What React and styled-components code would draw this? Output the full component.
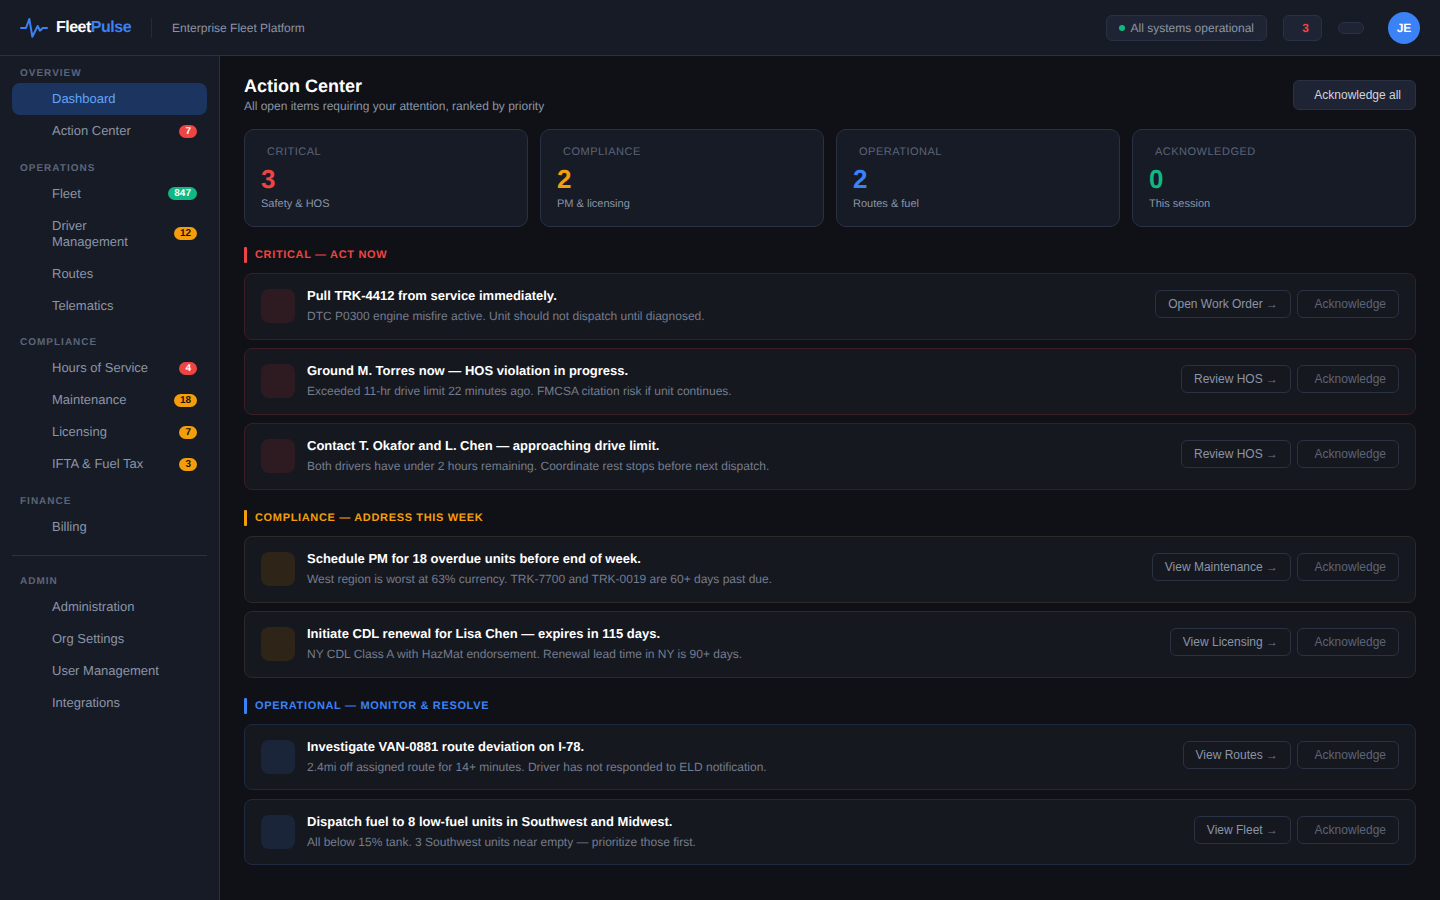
import React from "react";
import styled, { createGlobalStyle } from "styled-components";

const tones = {
  red: { main: "#ef4444", icon: "#2e1b21", border: "#3d1d24" },
  amber: { main: "#f59e0b", icon: "#2e2418", border: "#2a2a2a" },
  blue: { main: "#3b82f6", icon: "#1a2539", border: "#1e2a3e" },
  green: { main: "#10b981" },
};

const GlobalStyle = createGlobalStyle`
  * { box-sizing: border-box; }
  body {
    margin: 0;
    background: #0f1116;
    font-family: "Liberation Sans", Arial, sans-serif;
    text-rendering: geometricPrecision;
    overflow: hidden;
  }
`;

const Shell = styled.div`
  height: 900px;
  display: flex;
  flex-direction: column;
`;

const Header = styled.header`
  height: 56px;
  flex-shrink: 0;
  display: flex;
  align-items: center;
  padding: 0 20px;
  background: #171b26;
  border-bottom: 1px solid #2a3142;
`;

const Logo = styled.div`
  display: flex;
  align-items: center;
  gap: 8px;
  font-size: 16px;
  font-weight: 700;
  letter-spacing: -0.5px;
  color: #fff;
  span { color: #3b82f6; }
`;

const Divider = styled.div`
  width: 1px;
  height: 20px;
  background: #252b3a;
  margin: 0 20px;
`;

const Tagline = styled.div`
  font-size: 12px;
  color: #8b95a7;
`;

const HeaderRight = styled.div`
  margin-left: auto;
  display: flex;
  align-items: center;
`;

const StatusPill = styled.div`
  height: 26px;
  display: flex;
  align-items: center;
  gap: 6px;
  padding: 0 12px;
  font-size: 12px;
  color: #8b95a7;
  background: #1e2433;
  border: 1px solid #2a3142;
  border-radius: 6px;
  margin-right: 16px;
`;

const Dot = styled.span`
  width: 6px;
  height: 6px;
  border-radius: 50%;
  background: #10b981;
`;

const AlertPill = styled.div`
  width: 39px;
  height: 26px;
  display: flex;
  align-items: center;
  justify-content: flex-end;
  padding-right: 12px;
  font-size: 12px;
  font-weight: 700;
  color: #ef4444;
  background: #1e2433;
  border: 1px solid #2a3142;
  border-radius: 6px;
  margin-right: 16px;
`;

const EmptyPill = styled.div`
  width: 26px;
  height: 12px;
  background: #1e2433;
  border: 1px solid #2a3142;
  border-radius: 6px;
  margin-right: 24px;
`;

const Avatar = styled.div`
  width: 32px;
  height: 32px;
  border-radius: 50%;
  background: #3b82f6;
  color: #fff;
  font-size: 12px;
  font-weight: 700;
  display: flex;
  align-items: center;
  justify-content: center;
`;

const Body = styled.div`
  flex: 1;
  display: flex;
  min-height: 0;
`;

const Sidebar = styled.nav`
  width: 220px;
  flex-shrink: 0;
  padding: 11.4px 12px 0;
  background: #171b26;
  border-right: 1px solid #2a3142;
`;

const NavSection = styled.div`
  margin-bottom: ${(p) => (p.$ruled ? "11.9px" : "15.2px")};
`;

const NavLabel = styled.div`
  font-size: 10px;
  line-height: 11px;
  font-weight: 700;
  letter-spacing: 1px;
  color: #5c6579;
  padding: 1px 8px 0;
  margin-bottom: 4px;
`;

const NavItem = styled.div`
  display: flex;
  align-items: center;
  justify-content: space-between;
  gap: 10px;
  padding: 8px 10px 8px 40px;
  margin-bottom: 0.4px;
  font-size: 13px;
  line-height: 15.6px;
  color: ${(p) => (p.$active ? "#60a5fa" : "#8b95a7")};
  background: ${(p) => (p.$active ? "#1c3560" : "transparent")};
  border-radius: 8px;
`;

const Badge = styled.span`
  flex-shrink: 0;
  font-size: 10px;
  line-height: 13px;
  font-weight: 700;
  padding: 0 6px;
  border-radius: 7px;
  color: ${(p) => (p.$tone === "amber" ? "#1a1200" : "#fff")};
  background: ${(p) => tones[p.$tone].main};
`;

const NavRule = styled.div`
  height: 1px;
  background: #2a3142;
  margin-bottom: 19.5px;
`;

const Main = styled.main`
  flex: 1;
  min-width: 0;
  padding: 20px 24px;
`;

const TitleRow = styled.div`
  display: flex;
  align-items: flex-start;
  justify-content: space-between;
  margin-bottom: 15.5px;
`;

const Title = styled.h1`
  margin: 0;
  font-size: 18px;
  line-height: 21px;
  font-weight: 700;
  color: #fff;
`;

const Subtitle = styled.p`
  margin: 1.5px 0 0;
  font-size: 12px;
  line-height: 15px;
  color: #8b95a7;
`;

const AckAll = styled.button`
  width: 123px;
  height: 30px;
  margin-top: 4px;
  padding: 0 14px 0 0;
  text-align: right;
  font: inherit;
  font-size: 12px;
  color: #d1d5db;
  background: #1e2433;
  border: 1px solid #2a3142;
  border-radius: 6px;
`;

const StatGrid = styled.div`
  display: grid;
  grid-template-columns: repeat(4, 1fr);
  gap: 12px;
  margin-bottom: 20px;
`;

const StatCard = styled.div`
  height: 98px;
  padding: 16px;
  background: #171b26;
  border: 1px solid #2a3142;
  border-radius: 10px;
`;

const StatLabel = styled.div`
  font-size: 11px;
  line-height: 13px;
  letter-spacing: 0.5px;
  color: #5c6579;
  padding-left: 6px;
  margin-bottom: 5px;
`;

const StatValue = styled.div`
  font-size: 26px;
  line-height: 30px;
  font-weight: 700;
  color: ${(p) => tones[p.$tone].main};
  margin-bottom: 3px;
`;

const StatSub = styled.div`
  font-size: 11px;
  line-height: 14px;
  color: #8b95a7;
`;

const Section = styled.section`
  margin-bottom: 20.15px;
`;

const SectionHead = styled.div`
  display: flex;
  align-items: center;
  gap: 8px;
  height: 16px;
  margin-bottom: 10.45px;
  font-size: 11px;
  font-weight: 700;
  letter-spacing: 0.66px;
  color: ${(p) => tones[p.$tone].main};
  &::before {
    content: "";
    width: 3px;
    height: 16px;
    border-radius: 1px;
    background: ${(p) => tones[p.$tone].main};
  }
`;

const ItemList = styled.div`
  display: flex;
  flex-direction: column;
  gap: 8.7px;
`;

const Item = styled.div`
  height: 66.3px;
  display: flex;
  align-items: center;
  gap: 12px;
  padding: 0 16px;
  background: #16181f;
  border: 1px solid ${(p) => tones[p.$tone].border};
  border-radius: 8px;
`;

const ItemIcon = styled.div`
  width: 34px;
  height: 34px;
  flex-shrink: 0;
  margin-bottom: 1px;
  border-radius: 8px;
  background: ${(p) => tones[p.$tone].icon};
`;

const ItemText = styled.div`
  flex: 1;
  min-width: 0;
  padding-bottom: 1px;
`;

const ItemTitle = styled.div`
  font-size: 13px;
  line-height: 15px;
  font-weight: 700;
  color: #fff;
  margin-bottom: 6px;
`;

const ItemSub = styled.div`
  font-size: 12px;
  line-height: 15px;
  color: #747c8e;
`;

const Actions = styled.div`
  display: flex;
  align-items: center;
  gap: 6px;
  margin-bottom: 5px;
`;

const ActionButton = styled.button`
  height: 28px;
  padding: 0 12px;
  font: inherit;
  font-size: 12px;
  color: #8b95a7;
  background: transparent;
  border: 1px solid #2a3142;
  border-radius: 6px;
  white-space: nowrap;
  span {
    color: #6b7385;
  }
`;

const AckButton = styled(ActionButton)`
  width: 102px;
  padding: 0 12px 0 0;
  text-align: right;
  color: #5c6477;
`;

const navGroups = [
  {
    label: "OVERVIEW",
    items: [
      { name: "Dashboard", active: true },
      { name: "Action Center", badge: "7", tone: "red" },
    ],
  },
  {
    label: "OPERATIONS",
    items: [
      { name: "Fleet", badge: "847", tone: "green" },
      { name: "Driver Management", badge: "12", tone: "amber" },
      { name: "Routes" },
      { name: "Telematics" },
    ],
  },
  {
    label: "COMPLIANCE",
    items: [
      { name: "Hours of Service", badge: "4", tone: "red" },
      { name: "Maintenance", badge: "18", tone: "amber" },
      { name: "Licensing", badge: "7", tone: "amber" },
      { name: "IFTA & Fuel Tax", badge: "3", tone: "amber" },
    ],
  },
  { label: "FINANCE", items: [{ name: "Billing" }], rule: true },
  {
    label: "ADMIN",
    items: [
      { name: "Administration" },
      { name: "Org Settings" },
      { name: "User Management" },
      { name: "Integrations" },
    ],
  },
];

const stats = [
  { label: "CRITICAL", value: 3, sub: "Safety & HOS", tone: "red" },
  { label: "COMPLIANCE", value: 2, sub: "PM & licensing", tone: "amber" },
  { label: "OPERATIONAL", value: 2, sub: "Routes & fuel", tone: "blue" },
  { label: "ACKNOWLEDGED", value: 0, sub: "This session", tone: "green" },
];

const sections = [
  {
    title: "CRITICAL — ACT NOW",
    tone: "red",
    items: [
      {
        title: "Pull TRK-4412 from service immediately.",
        sub: "DTC P0300 engine misfire active. Unit should not dispatch until diagnosed.",
        action: "Open Work Order",
      },
      {
        title: "Ground M. Torres now — HOS violation in progress.",
        sub: "Exceeded 11-hr drive limit 22 minutes ago. FMCSA citation risk if unit continues.",
        action: "Review HOS",
      },
      {
        title: "Contact T. Okafor and L. Chen — approaching drive limit.",
        sub: "Both drivers have under 2 hours remaining. Coordinate rest stops before next dispatch.",
        action: "Review HOS",
      },
    ],
  },
  {
    title: "COMPLIANCE — ADDRESS THIS WEEK",
    tone: "amber",
    items: [
      {
        title: "Schedule PM for 18 overdue units before end of week.",
        sub: "West region is worst at 63% currency. TRK-7700 and TRK-0019 are 60+ days past due.",
        action: "View Maintenance",
      },
      {
        title: "Initiate CDL renewal for Lisa Chen — expires in 115 days.",
        sub: "NY CDL Class A with HazMat endorsement. Renewal lead time in NY is 90+ days.",
        action: "View Licensing",
      },
    ],
  },
  {
    title: "OPERATIONAL — MONITOR & RESOLVE",
    tone: "blue",
    items: [
      {
        title: "Investigate VAN-0881 route deviation on I-78.",
        sub: "2.4mi off assigned route for 14+ minutes. Driver has not responded to ELD notification.",
        action: "View Routes",
      },
      {
        title: "Dispatch fuel to 8 low-fuel units in Southwest and Midwest.",
        sub: "All below 15% tank. 3 Southwest units near empty — prioritize those first.",
        action: "View Fleet",
      },
    ],
  },
];

const PulseIcon = () => (
  <svg width="28" height="20" viewBox="0 0 28 20" fill="none">
    <path
      d="M1 10h5l3.3-9 3 17.7 5.4-10.7 2.3 4.7 2.7-2.7h4.3"
      stroke="#3b82f6"
      strokeWidth="2"
      strokeLinecap="round"
      strokeLinejoin="round"
    />
  </svg>
);

export default function App() {
  return (
    <Shell>
      <GlobalStyle />
      <Header>
        <Logo>
          <PulseIcon />
          <div>
            Fleet<span>Pulse</span>
          </div>
        </Logo>
        <Divider />
        <Tagline>Enterprise Fleet Platform</Tagline>
        <HeaderRight>
          <StatusPill>
            <Dot />
            All systems operational
          </StatusPill>
          <AlertPill>3</AlertPill>
          <EmptyPill />
          <Avatar>JE</Avatar>
        </HeaderRight>
      </Header>
      <Body>
        <Sidebar>
          {navGroups.map((group) => (
            <React.Fragment key={group.label}>
              <NavSection $ruled={group.rule}>
                <NavLabel>{group.label}</NavLabel>
                {group.items.map((item) => (
                  <NavItem key={item.name} $active={item.active}>
                    <span>{item.name}</span>
                    {item.badge && <Badge $tone={item.tone}>{item.badge}</Badge>}
                  </NavItem>
                ))}
              </NavSection>
              {group.rule && <NavRule />}
            </React.Fragment>
          ))}
        </Sidebar>
        <Main>
          <TitleRow>
            <div>
              <Title>Action Center</Title>
              <Subtitle>All open items requiring your attention, ranked by priority</Subtitle>
            </div>
            <AckAll>Acknowledge all</AckAll>
          </TitleRow>
          <StatGrid>
            {stats.map((stat) => (
              <StatCard key={stat.label}>
                <StatLabel>{stat.label}</StatLabel>
                <StatValue $tone={stat.tone}>{stat.value}</StatValue>
                <StatSub>{stat.sub}</StatSub>
              </StatCard>
            ))}
          </StatGrid>
          {sections.map((section) => (
            <Section key={section.title}>
              <SectionHead $tone={section.tone}>{section.title}</SectionHead>
              <ItemList>
                {section.items.map((item) => (
                  <Item key={item.title} $tone={section.tone}>
                    <ItemIcon $tone={section.tone} />
                    <ItemText>
                      <ItemTitle>{item.title}</ItemTitle>
                      <ItemSub>{item.sub}</ItemSub>
                    </ItemText>
                    <Actions>
                      <ActionButton>
                        {item.action} <span>→</span>
                      </ActionButton>
                      <AckButton>Acknowledge</AckButton>
                    </Actions>
                  </Item>
                ))}
              </ItemList>
            </Section>
          ))}
        </Main>
      </Body>
    </Shell>
  );
}
